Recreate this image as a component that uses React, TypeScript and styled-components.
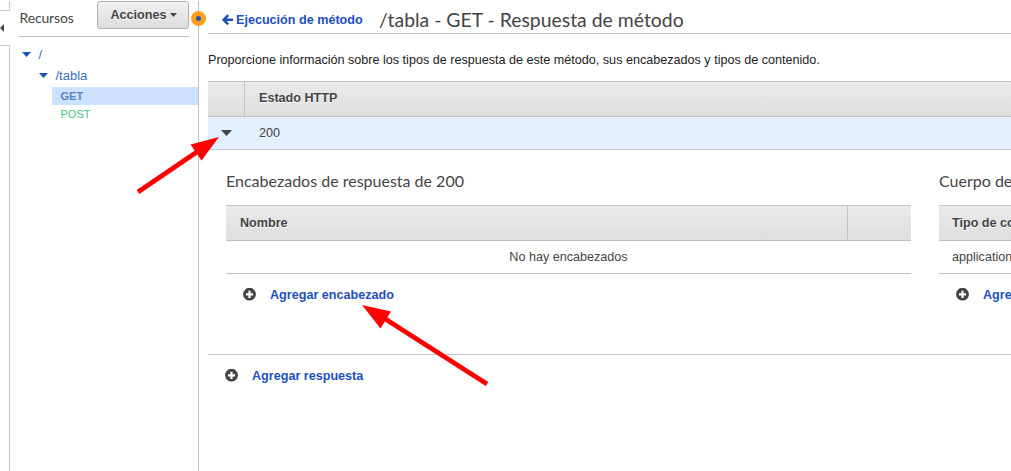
import React from "react";
import styled, { createGlobalStyle } from "styled-components";

const GlobalStyle = createGlobalStyle`
  * { box-sizing: border-box; }
  body {
    margin: 0;
    background: #fff;
    color: #444;
    font: 12.6px/18px "Liberation Sans", Arial, sans-serif;
    overflow: hidden;
  }
`;

const Page = styled.div`
  position: relative;
  display: flex;
  width: 1011px;
  height: 471px;
  padding-top: 1px;
  overflow: hidden;
`;

const Rail = styled.div`
  display: flex;
  flex-direction: column;
  width: 10px;
  flex: none;
`;

const RailTop = styled.div`
  height: 10px;
  border-right: 1px solid #c8c8c8;
  border-bottom: 1px solid #c8c8c8;
`;

const RailToggle = styled.div`
  height: 34px;
  display: flex;
  align-items: center;
`;

const RailBody = styled.div`
  flex: 1;
  border-top: 1px solid #c8c8c8;
  border-right: 1px solid #c8c8c8;
`;

const Sidebar = styled.aside`
  width: 189px;
  flex: none;
  border-right: 1px solid #c0c0c0;
`;

const SidebarHead = styled.div`
  display: flex;
  justify-content: space-between;
  height: 36px;
  margin: 0 9px;
  border-bottom: 1px solid #c3c3c3;
`;

const SidebarTitle = styled.span`
  font: 14px/20px Lato, sans-serif;
  letter-spacing: -0.15px;
  padding: 7px 0 0 0.5px;
`;

const ActionsButton = styled.button`
  display: flex;
  align-items: center;
  justify-content: center;
  gap: 3px;
  width: 92px;
  height: 28px;
  padding: 0 0 1px 1px;
  border: 1px solid #b0b0b0;
  border-radius: 3px;
  background: linear-gradient(#f1f1f1, #dcdcdc);
  color: #444;
  font: bold 12.6px/18px "Liberation Sans", Arial, sans-serif;
  text-shadow: 0 1px 0 #fff;
`;

const Tree = styled.div`
  padding-top: 7px;
`;

const Node = styled.div<{ $indent: number }>`
  display: flex;
  align-items: center;
  gap: 7.5px;
  height: 21px;
  padding-left: ${(p) => p.$indent}px;
  color: #3a6fc4;
  font-size: 13px;
`;

const Methods = styled.div`
  padding-top: 1px;
`;

const Method = styled.div<{ $selected?: boolean }>`
  height: 18px;
  margin-left: 42px;
  padding-left: 8.5px;
  font-size: 11px;
  line-height: 18px;
  font-weight: ${(p) => (p.$selected ? "bold" : "normal")};
  color: ${(p) => (p.$selected ? "#5a84c4" : "#3cc67f")};
  background: ${(p) => (p.$selected ? "#cce2ff" : "transparent")};
`;

const Main = styled.main`
  flex: 1;
  min-width: 0;
  padding-left: 9px;
`;

const Header = styled.header`
  display: flex;
  height: 33px;
  padding-left: 14px;
  border-bottom: 1px solid #c8c8c8;
`;

const BackLink = styled.a`
  display: flex;
  align-items: flex-start;
  gap: 3px;
  width: 157px;
  padding-top: 10px;
  color: #1d4fbe;
  font-weight: bold;
  white-space: nowrap;
  svg { margin-top: 3px; }
`;

const Title = styled.h1`
  margin: 0;
  padding-top: 6px;
  font: 19.4px/26px Lato, sans-serif;
`;

const Intro = styled.p`
  margin: 0;
  padding: 17px 0 12px;
  color: #222;
`;

const HeadRow = styled.div`
  display: flex;
  height: 36px;
  border-top: 1px solid #c3c3c3;
  border-bottom: 1px solid #c0c0c0;
  background: linear-gradient(#eaeaea, #dedede);
`;

const HeadCell = styled.div<{ $width?: number; $inset?: number; $top?: number }>`
  ${(p) => (p.$width ? `width: ${p.$width}px; flex: none;` : "flex: 1;")}
  padding: ${(p) => p.$top ?? 8}px 0 0 ${(p) => p.$inset ?? 14}px;
  font-weight: bold;
  text-shadow: 0 1px 0 #fff;
  white-space: nowrap;
  & + & { border-left: 1px solid #c3c3c3; }
`;

const StatusRow = styled.div`
  display: flex;
  height: 33px;
  background: #e2f0ff;
  border-bottom: 1px solid #c3ccd4;
  line-height: 32px;
`;

const ToggleCell = styled.div`
  display: flex;
  align-items: center;
  width: 51px;
  padding-left: 13px;
`;

const Details = styled.div`
  display: flex;
  gap: 28px;
  height: 205px;
  padding: 20px 0 0 18px;
  border-bottom: 1px solid #c3c3c3;
  overflow: hidden;
`;

const Panel = styled.section`
  width: 685px;
  flex: none;
`;

const PanelTitle = styled.h2`
  margin: 0;
  height: 35px;
  font: 16px/22px Lato, sans-serif;
`;

const BodyRow = styled.div<{ $center?: boolean }>`
  height: 33px;
  padding-left: ${(p) => (p.$center ? 0 : 13)}px;
  border-bottom: 1px solid #c3c3c3;
  line-height: 32px;
  text-align: ${(p) => (p.$center ? "center" : "left")};
`;

const AddRow = styled.div`
  display: flex;
  align-items: center;
  gap: 14px;
  height: 41px;
  padding-left: 17px;
  color: #1d4fbe;
  font-weight: bold;
`;

const Handle = styled.div`
  position: absolute;
  left: 191px;
  top: 11px;
  width: 15px;
  height: 15px;
  border: 5px solid #ff9f1a;
  border-radius: 50%;
  background: #2456b8;
`;

const Annotations = styled.svg`
  position: absolute;
  inset: 0;
  pointer-events: none;
`;

const Caret = ({ width = 9, height = 5, color = "#444" }) => (
  <svg width={width} height={height} viewBox="0 0 10 5" preserveAspectRatio="none">
    <path d="M0 0h10L5 5z" fill={color} />
  </svg>
);

const PlusIcon = () => (
  <svg width="13" height="13" viewBox="0 0 13 13">
    <circle cx="6.5" cy="6.2" r="6.4" fill="#444" />
    <path d="M6.5 2.7v7.2M2.9 6.3h7.2" stroke="#fff" strokeWidth="2.2" />
  </svg>
);

const ArrowLeft = () => (
  <svg width="11" height="12" viewBox="0 0 11 12">
    <path d="M6.2 1.2 1.6 5.8l4.6 4.6M2 5.8h9" fill="none" stroke="#1d4fbe" strokeWidth="2.4" />
  </svg>
);

export default function App() {
  return (
    <>
      <GlobalStyle />
      <Page>
        <Rail>
          <RailTop />
          <RailToggle>
            <svg width="4" height="8" viewBox="0 0 4 8"><path d="M4 0v8L0 4z" fill="#444" /></svg>
          </RailToggle>
          <RailBody />
        </Rail>
        <Sidebar>
          <SidebarHead>
            <SidebarTitle>Recursos</SidebarTitle>
            <ActionsButton>Acciones <Caret width={7} height={4} /></ActionsButton>
          </SidebarHead>
          <Tree>
            <Node $indent={12}><Caret color="#1d4fbe" />/</Node>
            <Node $indent={29}><Caret color="#1d4fbe" />/tabla</Node>
            <Methods>
              <Method $selected>GET</Method>
              <Method>POST</Method>
            </Methods>
          </Tree>
        </Sidebar>
        <Main>
          <Header>
            <BackLink><ArrowLeft />Ejecución de método</BackLink>
            <Title>/tabla - GET - Respuesta de método</Title>
          </Header>
          <Intro>Proporcione información sobre los tipos de respuesta de este método, sus encabezados y tipos de contenido.</Intro>
          <HeadRow>
            <HeadCell $width={36} />
            <HeadCell $top={7}>Estado HTTP</HeadCell>
          </HeadRow>
          <StatusRow>
            <ToggleCell><Caret width={11} height={6} /></ToggleCell>
            200
          </StatusRow>
          <Details>
            <Panel>
              <PanelTitle>Encabezados de respuesta de 200</PanelTitle>
              <HeadRow>
                <HeadCell>Nombre</HeadCell>
                <HeadCell $width={64} />
              </HeadRow>
              <BodyRow $center>No hay encabezados</BodyRow>
              <AddRow><PlusIcon />Agregar encabezado</AddRow>
            </Panel>
            <Panel>
              <PanelTitle>Cuerpo de respuesta de 200</PanelTitle>
              <HeadRow>
                <HeadCell $inset={13}>Tipo de contenido</HeadCell>
              </HeadRow>
              <BodyRow>application/json</BodyRow>
              <AddRow><PlusIcon />Agregar modelo de respuesta</AddRow>
            </Panel>
          </Details>
          <AddRow><PlusIcon />Agregar respuesta</AddRow>
        </Main>
        <Handle />
        <Annotations width="1011" height="471" viewBox="0 0 1011 471" fill="#f00">
          <path d="M138 192 199 150.5" stroke="#f00" strokeWidth="4.8" />
          <path d="M219 137 190.5 144.5 201.5 160.5z" />
          <path d="M487 384 383 317.5" stroke="#f00" strokeWidth="4.8" />
          <path d="M362 305 391 311.5 380.5 328.5z" />
        </Annotations>
      </Page>
    </>
  );
}
